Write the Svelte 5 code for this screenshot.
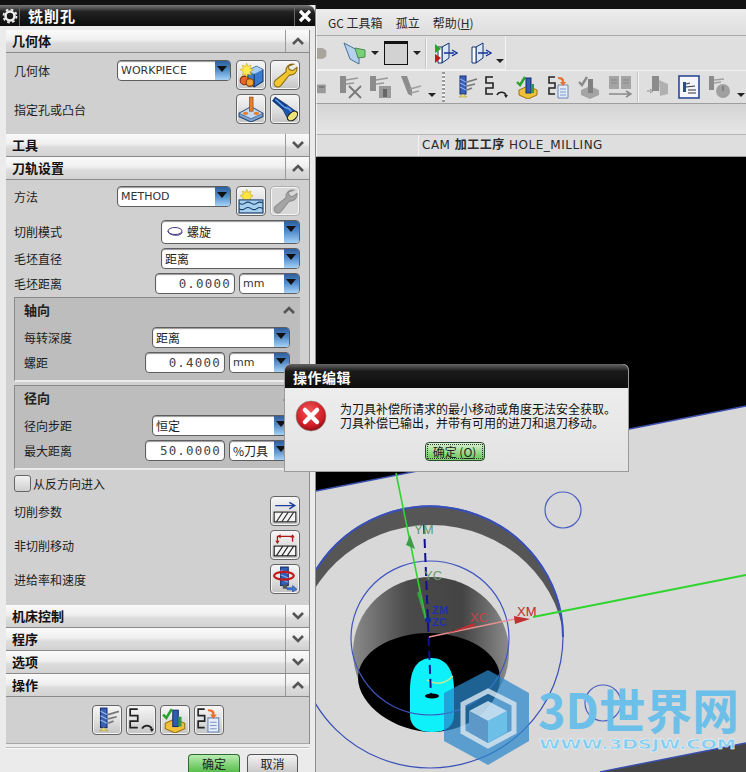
<script>
	const opButtons = ['gen', 'replay', 'verify', 'post']
	const collapsed = ['机床控制', '程序', '选项']
</script>

{#snippet chevron(up)}
	<svg class="chev" viewBox="0 0 14 10" width="14" height="10">
		{#if up}
			<path d="M2 8l5-5 5 5" />
		{:else}
			<path d="M2 2l5 5 5-5" />
		{/if}
	</svg>
{/snippet}

{#snippet header(title, up)}
	<div class="header">
		<span>{title}</span>
		<div class="toggle">{@render chevron(up)}</div>
	</div>
{/snippet}

{#snippet arrowBtn()}
	<span class="arrow"><i></i></span>
{/snippet}

{#snippet ic(name)}
	<svg viewBox="0 0 24 24" width="24" height="24">
		{#if name === 'wp'}
			<path d="M9 8l8-4 6 3v11l-8 5-6-4z" fill="#3a7bd0" stroke="#12396f" />
			<path d="M9 8l8-4 6 3-8 4z" fill="#a7cdf2" />
			<path d="M15 11v12" stroke="#12396f" />
			<circle cx="6" cy="17" r="4" fill="#e8662a" stroke="#7a2a10" />
			<circle cx="11" cy="19" r="3.5" fill="#f2a02e" stroke="#7a3a10" />
			<path d="M8 1l1 3 3-1-1 3 3 1-3 2 1 3-3-1-1 3-1-3-3 1 1-3-3-2 3-1-1-3 3 1z" fill="#ffec4c" stroke="#d0a820" stroke-width=".6" />
		{:else if name === 'wrench' || name === 'wrenchoff'}
			<path d="M20 2a6 6 0 0 0-7 7L3 17a3.5 3.5 0 0 0 5 5l8-10a6 6 0 0 0 7-7l-4 3-3-1-1-3z" fill={name === 'wrench' ? '#f2c62e' : '#a4a4a4'} stroke={name === 'wrench' ? '#8a6a10' : '#8e8e8e'} />
		{:else if name === 'hole'}
			<path d="M1 16l11-6 11 6v3l-11 5-11-5z" fill="#7fa4d4" stroke="#2a4a78" />
			<path d="M1 16l11-6 11 6-11 5z" fill="#c4d8f0" stroke="#2a4a78" stroke-width=".6" />
			<ellipse cx="7" cy="16" rx="2.6" ry="1.5" fill="#e8802a" />
			<ellipse cx="17" cy="16" rx="2.6" ry="1.5" fill="#e8802a" />
			<rect x="10.5" y="1" width="3.4" height="13" fill="#e8802a" stroke="#8a4210" stroke-width=".6" />
		{:else if name === 'torch'}
			<path d="M3 1L0.500 4.500 10 12.500 13.500 8z" fill="#10408e" stroke="#0a1f50" stroke-width=".6" />
			<path d="M13.500 8L10 12.500 15 22 23 15z" fill="#1a55b0" stroke="#0a1f50" stroke-width=".6" />
			<path d="M3 3l8 7 5 2 3 4" fill="none" stroke="#6aa4ec" stroke-width="1.400" />
			<ellipse cx="19" cy="18.500" rx="5.400" ry="3.400" transform="rotate(-42 19 18.500)" fill="#f0e27a" stroke="#1a1a1a" />
		{:else if name === 'method'}
			<path d="M8 1l1 3 3-1-1 3 3 1-3 2 1 3-3-1-1 3-1-3-3 1 1-3-3-2 3-1-1-3 3 1z" fill="#ffe83c" stroke="#c8a820" stroke-width=".6" />
			<rect x="1" y="11" width="22" height="12" fill="#a8d0ee" stroke="#17406e" />
			<path d="M1 14q3 2 5.500 0t5.500 0 5.500 0 5.500 0M1 19q3 2 5.500 0t5.500 0 5.500 0 5.500 0" fill="none" stroke="#17406e" />
		{:else if name === 'cut'}
			<path d="M3 7h17M16 4l5 3-5 3" fill="none" stroke="#1f3f9c" stroke-width="1.3" />
			<rect x="2" y="13" width="20" height="9" fill="#f4f4f4" stroke="#222" />
			<path d="M4 22l6-9M9 22l6-9M14 22l6-9" stroke="#333" />
		{:else if name === 'noncut'}
			<path d="M5 9V4h14v5" fill="none" stroke="#b01818" stroke-width="1.2" />
			<path d="M3 8l2 3 2-3zM17 5l2-3 2 3zM8 2L5 4l3 2z" fill="#b01818" />
			<rect x="2" y="13" width="20" height="9" fill="#f4f4f4" stroke="#111" />
			<path d="M4 22l6-9M9 22l6-9M14 22l6-9" stroke="#222" />
		{:else if name === 'feed'}
			<rect x="8" y="1" width="7" height="17" fill="#2f5fb8" stroke="#112a66" />
			<path d="M8 4l7 3M8 8l7 3M8 12l7 3" stroke="#88aee8" />
			<ellipse cx="11" cy="9" rx="9" ry="3.6" fill="none" stroke="#c01a1a" stroke-width="2" />
			<rect x="10" y="17" width="4" height="4" fill="#555" />
			<path d="M14 20h5v-2l4 3.500-4 2.500v-2h-5z" fill="#3a78e0" stroke="#1a3a88" stroke-width=".5" />
		{:else if name === 'gen'}
			<rect x="6" y="1" width="6" height="18" fill="#3a60b8" stroke="#172e70" />
			<path d="M6 4l6 3M6 8l6 3M6 12l6 3" stroke="#9ab8ee" />
			<path d="M13 7l10-3M13 11l8-2M13 15l5-2" stroke="#777" stroke-width="1.6" />
			<path d="M9 19l-4 3h8z" fill="#f0dc70" stroke="#a09030" stroke-width=".5" />
		{:else if name === 'replay'}
			<path d="M9 2H2v6h7v5H2v6h7" fill="none" stroke="#222" stroke-width="1.6" />
			<path d="M13 20a5 5 0 0 1 9 0" fill="none" stroke="#222" stroke-width="1.6" />
			<path d="M20 20h4l-2 3z" fill="#222" />
		{:else if name === 'verify'}
			<path d="M1 7l3 3 5-8" fill="none" stroke="#2aa32a" stroke-width="2.4" />
			<path d="M3 15l9-4 9 4v5l-9 4-9-4z" fill="#f0c038" stroke="#9a7410" />
			<rect x="10" y="3" width="5" height="15" fill="#2f5fb0" stroke="#12306c" />
			<rect x="15" y="9" width="3" height="9" fill="#2d9a4a" />
		{:else if name === 'post'}
			<path d="M8 2H2v6h6v5H2v6h6" fill="none" stroke="#222" stroke-width="1.5" />
			<path d="M11 10h10v13H11z" fill="#e4ecf8" stroke="#6a86b8" />
			<path d="M13 14h6M13 17h6M13 20h6" stroke="#7a96c4" />
			<path d="M11 2q7 0 6 5h2l-3 4-3-4h2q0-3-4-3z" fill="#e8702a" />
		{:else if name === 'clip'}
			<path d="M0 4h9l6 4v9l-5 4H0z" fill="#a9a49c" />
		{:else if name === 'view'}
			<path d="M2 2l15 8v13L8 18z" fill="#b4d2ee" stroke="#4a6f96" />
			<path d="M13 7l10 2v7l-7 1z" fill="#78d078" stroke="#4a8a4a" />
		{:else if name === 'box'}
			<rect x="0.500" y="0.500" width="23" height="23" fill="#d2d2d2" stroke="#111" />
			<rect x="0" y="0" width="24" height="3" fill="#111" />
		{:else if name === 'boxa' || name === 'boxb'}
			<path d="M8 6l7-4v15l-7 5z" fill="#d8e8fa" stroke="#12306c" />
			<path d="M4 6h4v16H4z" fill="#fff" stroke="#12306c" />
			<path d="M10 12h10M18 9l5 3-5 3" fill="none" stroke="#12309c" stroke-width="1.3" />
			{#if name === 'boxa'}
				<path d="M1 3l6 5-6 4z" fill="#2aa32a" />
				<path d="M1 13l6 4-6 5z" fill="#c01a1a" />
			{/if}
		{:else if name === 'gdoc'}
			<rect x="0" y="8" width="14" height="14" fill="#9a9a9a" />
			<rect x="3" y="11" width="9" height="2" fill="#6e6e6e" />
		{:else if name === 'gx'}
			<rect x="2" y="1" width="6" height="17" fill="#8c8c8c" />
			<path d="M8 5l12-2M8 9l8-1" stroke="#9a9a9a" stroke-width="1.6" />
			<path d="M11 11l12 12M23 11L11 23" stroke="#777" stroke-width="1.8" />
		{:else if name === 'gstop'}
			<rect x="2" y="1" width="6" height="15" fill="#8c8c8c" />
			<path d="M8 5l12-2M8 9l8-1" stroke="#9a9a9a" stroke-width="1.6" />
			<rect x="11" y="11" width="12" height="12" fill="#999" />
			<rect x="15" y="14" width="4" height="8" fill="#666" />
		{:else if name === 'gtool'}
			<path d="M3 1l6 0 5 14v6l-4-2z" fill="#8c8c8c" />
			<path d="M12 14l11-3M13 18l8-2" stroke="#a0a0a0" stroke-width="1.6" />
		{:else if name === 'gcheck'}
			<path d="M1 7l3 3 5-8" fill="none" stroke="#8a8a8a" stroke-width="2.4" />
			<path d="M3 15l9-4 9 4v5l-9 4-9-4z" fill="#a4a4a4" />
			<rect x="10" y="4" width="5" height="14" fill="#808080" />
		{:else if name === 'gbook'}
			<rect x="1" y="1" width="10" height="13" fill="#a4a4a4" />
			<rect x="13" y="1" width="10" height="13" fill="#a4a4a4" />
			<path d="M3 5h6M3 8h6M15 5h6M15 8h6" stroke="#888" />
			<path d="M1 19h20M18 16l5 3-5 3" fill="none" stroke="#8a8a8a" stroke-width="1.6" />
		{:else if name === 'gmove'}
			<rect x="6" y="1" width="7" height="15" fill="#8c8c8c" />
			<path d="M13 5l9 4v10l-8 2" fill="#b0b0b0" />
			<path d="M1 16h4M4 14l3 2-3 2" stroke="#909090" fill="none" />
		{:else if name === 'doc'}
			<rect x="2" y="1" width="20" height="22" fill="#f4f6fb" stroke="#2c4a94" stroke-width="1.6" />
			<rect x="6" y="7" width="3" height="10" fill="#2c4a94" />
			<path d="M9 9l4-1M9 12l9-1M11 15h8M11 18h8" stroke="#333" />
		{:else if name === 'gclock'}
			<rect x="2" y="1" width="5" height="14" fill="#8c8c8c" />
			<path d="M7 5l10-1M7 8l7-1" stroke="#a0a0a0" stroke-width="1.6" />
			<circle cx="16" cy="16" r="7" fill="#a0a0a0" />
			<path d="M16 11v5" stroke="#777" stroke-width="1.5" />
		{/if}
	</svg>
{/snippet}

{#snippet tbtn(name, off)}
	<button class="ibtn" class:off>{@render ic(name)}</button>
{/snippet}

{#snippet more()}
	<span class="more"></span>
{/snippet}

{#snippet dots()}
	<span class="tb-arrow"></span>
{/snippet}

<div class="page">
	<aside class="dialog">
		<div class="titlebar">
			<span class="gear">
				<svg viewBox="0 0 16 16" width="16" height="16">
					<circle cx="8" cy="8" r="4.500" fill="none" stroke="#eee" stroke-width="2.600" />
					<circle cx="8" cy="8" r="6.500" fill="none" stroke="#eee" stroke-width="1.800" stroke-dasharray="2.600 2.500" />
				</svg>
			</span>
			<span class="title">铣削孔</span>
			<span class="close">
				<svg viewBox="0 0 14 14" width="14" height="14"><path d="M2 2l10 10M12 2L2 12" stroke="#fff" stroke-width="3.200" /></svg>
			</span>
		</div>

		<div class="stack">
			{@render header('几何体', true)}
			<section class="body geo">
				<div class="row tall top">
					<span class="label">几何体</span>
					<div class="field combo"><span class="val lat">WORKPIECE</span>{@render arrowBtn()}</div>
					{@render tbtn('wp')}
					{@render tbtn('wrench')}
				</div>
				<div class="row tall">
					<span class="label">指定孔或凸台</span>
					{@render tbtn('hole')}
					{@render tbtn('torch')}
				</div>
			</section>

			{@render header('工具', false)}
			{@render header('刀轨设置', true)}

			<section class="body path">
				<div class="row tall top">
					<span class="label">方法</span>
					<div class="field combo"><span class="val lat">METHOD</span>{@render arrowBtn()}</div>
					{@render tbtn('method')}
					{@render tbtn('wrenchoff', true)}
				</div>
				<div class="row mode">
					<span class="label">切削模式</span>
					<div class="field select wide big">
						<svg class="spiral" viewBox="0 0 18 12" width="18" height="12">
							<ellipse cx="9" cy="5" rx="7" ry="3.500" fill="none" stroke="#443a88" />
							<path d="M2 5c0 5 14 6 14 1" fill="none" stroke="#443a88" />
						</svg>
						<span class="val">螺旋</span>{@render arrowBtn()}
					</div>
				</div>
				<div class="row std">
					<span class="label">毛坯直径</span>
					<div class="field select wide"><span class="val">距离</span>{@render arrowBtn()}</div>
				</div>
				<div class="row std">
					<span class="label">毛坯距离</span>
					<div class="field input"><span>0.0000</span></div>
					<div class="field unit"><span class="val lat">mm</span>{@render arrowBtn()}</div>
				</div>

				<div class="group">
					<div class="ghead"><b>轴向</b>{@render chevron(true)}</div>
					<div class="row std nomargin">
						<span class="label">每转深度</span>
						<div class="field select wide"><span class="val">距离</span>{@render arrowBtn()}</div>
					</div>
					<div class="row std">
						<span class="label">螺距</span>
						<div class="field input"><span>0.4000</span></div>
						<div class="field unit"><span class="val lat">mm</span>{@render arrowBtn()}</div>
					</div>
				</div>

				<div class="group">
					<div class="ghead"><b>径向</b>{@render chevron(true)}</div>
					<div class="row std nomargin">
						<span class="label">径向步距</span>
						<div class="field select wide"><span class="val">恒定</span>{@render arrowBtn()}</div>
					</div>
					<div class="row std">
						<span class="label">最大距离</span>
						<div class="field input"><span>50.0000</span></div>
						<div class="field unit"><span class="val">%刀具</span>{@render arrowBtn()}</div>
					</div>
				</div>

				<div class="check"><span class="box"></span>从反方向进入</div>

				<div class="row tall sp">
					<span class="label">切削参数</span>
					{@render tbtn('cut')}
				</div>
				<div class="row tall sp">
					<span class="label">非切削移动</span>
					{@render tbtn('noncut')}
				</div>
				<div class="row tall sp">
					<span class="label">进给率和速度</span>
					{@render tbtn('feed')}
				</div>
			</section>

			{#each collapsed as name}
				{@render header(name, false)}
			{/each}

			{@render header('操作', true)}
			<section class="body ops">
				{#each opButtons as b}
					{@render tbtn(b)}
				{/each}
			</section>
		</div>

		<div class="footer">
			<button class="btn ok">确定</button>
			<button class="btn">取消</button>
		</div>
	</aside>

	<main class="main">
		<nav class="menubar">
			<span>GC 工具箱</span>
			<span>孤立</span>
			<span>帮助(<u>H</u>)</span>
		</nav>

		<div class="tbar one">
			<div class="tgroup">
				<span class="tic clip">{@render ic('clip')}</span>
				<span class="tic s10">{@render ic('view')}</span>
				{@render dots()}
				<span class="tic">{@render ic('box')}</span>
				{@render dots()}
				<span class="tsep"></span>
				<span class="tic">{@render ic('boxa')}</span>
				<span class="tic s6">{@render ic('boxb')}</span>
				{@render more()}
			</div>
		</div>

		<div class="tbar two">
			<span class="tic clip">{@render ic('gdoc')}</span>
			<span class="tic">{@render ic('gx')}</span>
			<span class="tic">{@render ic('gstop')}</span>
			<span class="tic">{@render ic('gtool')}</span>
			{@render more()}
			<span class="tsep grip"></span>
			<span class="tic">{@render ic('gen')}</span>
			<span class="tic">{@render ic('replay')}</span>
			<span class="tic s2">{@render ic('verify')}</span>
			<span class="tic s1">{@render ic('post')}</span>
			<span class="tic s1">{@render ic('gcheck')}</span>
			<span class="tic">{@render ic('gbook')}</span>
			<span class="tsep"></span>
			<span class="tic">{@render ic('gmove')}</span>
			<span class="tic s1">{@render ic('doc')}</span>
			<span class="tic">{@render ic('gclock')}</span>
			{@render more()}
		</div>

		<div class="band"></div>

		<div class="tabbar">
			<span class="tab">CAM <b>加工工序</b> HOLE_MILLING</span>
		</div>

		<svg class="viewport" viewBox="316 157 430 615" width="430" height="615">
			<defs>
				<linearGradient id="wall" x1="0" x2="1" y1="0" y2="0">
					<stop offset="0" stop-color="#8a8a8a" />
					<stop offset="0.350" stop-color="#4a4a4a" />
					<stop offset="0.700" stop-color="#444" />
					<stop offset="1" stop-color="#8c8c8c" />
				</linearGradient>
			</defs>
			<rect x="316" y="157" width="430" height="615" fill="#000" />
			<path d="M316 491L746 406V743L600 772H316z" fill="#d8d8d8" />
			<path d="M746 743L600 772H746z" fill="#454545" />
			<path d="M316 491L746 406M600 772L746 743" fill="none" stroke="#3a4fb0" stroke-width="1.500" />

			<circle cx="563" cy="510" r="18" fill="none" stroke="#4a5fc0" stroke-width="1.200" />

			<ellipse cx="430" cy="637" rx="133" ry="131" fill="#565656" />
			<ellipse cx="431" cy="652" rx="134" ry="127" fill="#d8d8d8" />
			<path d="M316 570A133 131 0 0 1 563 637" fill="none" stroke="#3a50b8" stroke-width="2" />
			<ellipse cx="430" cy="637" rx="133" ry="131" fill="none" stroke="#3a50b8" stroke-width="1.200" />

			<ellipse cx="431" cy="652" rx="78" ry="75" fill="url(#wall)" />
			<path d="M358 678A71 45 0 0 1 500 678C500 705 470 732 432 732 395 732 358 705 358 678z" fill="#000" />
			<path d="M410 690C410 668 418 658 432 658 446 658 454 670 454 690V715C454 726 446 732 432 732 418 732 410 726 410 715z" fill="#0ef0fa" />
			<path d="M427 680q14 8 26-4" fill="none" stroke="#c8e890" stroke-width="1.500" />
			<ellipse cx="430" cy="638" rx="79" ry="77" fill="none" stroke="#4056c0" stroke-width="1.200" />

			<circle cx="603" cy="703" r="18" fill="none" stroke="#4a5fc0" stroke-width="1.200" />

			<path d="M396 473L426 620" stroke="#2fd42f" stroke-width="1.600" />
			<path d="M410 535l-4 10 9 4z" fill="#3f9a4a" />
			<path d="M420 590l-3 3 9 30z" fill="#3f9a4a" />
			<path d="M533 617L746 575" stroke="#2fd42f" stroke-width="1.800" />
			<path d="M424 525L431 696" stroke="#101090" stroke-width="2" stroke-dasharray="9 5" />
			<circle cx="428" cy="620" r="3" fill="#1428a0" />
			<path d="M429 637L515 619" stroke="#e89090" stroke-width="1.500" />
			<path d="M445 634l30-8-1-3z" fill="#c03030" />
			<path d="M514 616l16 3-15 5z" fill="#c03030" />
			<ellipse cx="432" cy="696" rx="7" ry="2.500" fill="#000" />

			<g class="vlabel">
				<text x="414" y="534" fill="#5a9a6a">YM</text>
				<text x="424" y="580" fill="#6a9a70">YC</text>
				<text x="470" y="622" fill="#c04848">XC</text>
				<text x="517" y="616" fill="#c02828">XM</text>
			</g>
			<g class="vlabel small">
				<text x="432" y="614" fill="#2030b0">ZM</text>
				<text x="432" y="626" fill="#2030b0">ZC</text>
			</g>

			<g class="mark">
				<path d="M488 670L529 693V741L488 765 444 741V693z" fill="#2a86cc" opacity=".72" />
				<path d="M488 691L514 704V732L488 746 463 732V704z" fill="none" stroke="#dce8f0" stroke-width="5" opacity=".8" />
				<path d="M488 701L507 711 488 721 469 711z" fill="#cfe4f2" opacity=".85" />
				<path d="M469 711L488 721V743L469 732z" fill="#5d98c8" />
				<path d="M507 711L488 721V743L507 732z" fill="#6cc0e8" />
				<text class="wm-big" x="538" y="729" textLength="201" lengthAdjust="spacingAndGlyphs">3D世界网</text>
				<text class="wm-small" x="539" y="749" textLength="197" lengthAdjust="spacingAndGlyphs">WWW.3DSJW.COM</text>
			</g>
		</svg>
	</main>

	<div class="modal">
		<div class="mtitle">操作编辑</div>
		<div class="mbody">
			<div class="mrow">
				<svg viewBox="0 0 32 32" width="32" height="32">
					<defs>
						<radialGradient id="err" cx="0.450" cy="0.350" r="0.700">
							<stop offset="0" stop-color="#f25a5a" />
							<stop offset="0.700" stop-color="#cf1c24" />
							<stop offset="1" stop-color="#7a0c10" />
						</radialGradient>
					</defs>
					<circle cx="16" cy="16" r="15" fill="url(#err)" stroke="#8a8a8a" stroke-width=".6" />
					<path d="M10 10l12 12M22 10L10 22" stroke="#fff" stroke-width="4.500" stroke-linecap="round" />
				</svg>
				<p>为刀具补偿所请求的最小移动或角度无法安全获取。<br />刀具补偿已输出，并带有可用的进刀和退刀移动。</p>
			</div>
			<button class="mok"><span>确定 (<u>O</u>)</span></button>
		</div>
	</div>
</div>

<style>
	:global(body) {
		background: #111;
	}

	.page {
		position: relative;
		display: flex;
		width: 746px;
		height: 772px;
		overflow: hidden;
		background: #121212;
		font-family: "Noto Sans CJK SC", "DejaVu Sans", sans-serif;
		font-size: 12px;
		color: #1c1c1c;
	}

	/* left dialog */
	.dialog {
		width: 315px;
		height: 767px;
		margin-top: 5px;
		background: #ebebeb;
		border-right: 1px solid #8c8c8c;
		flex: none;
	}

	.titlebar {
		display: flex;
		align-items: center;
		height: 21px;
		border-top-right-radius: 8px;
		background: linear-gradient(#7a7a7a, #222 32%, #0c0c0c);
		color: #fff;
	}

	.gear {
		display: flex;
		width: 20px;
		justify-content: center;
		border-right: 1px solid #666;
		height: 100%;
		align-items: center;
		padding-left: 1px;
		box-sizing: border-box;
	}

	.title {
		flex: 1;
		margin-left: 8px;
		font-size: 15px;
		font-weight: 700;
		letter-spacing: 1px;
		line-height: 21px;
	}

	.close {
		display: flex;
		width: 20px;
		height: 100%;
		justify-content: center;
		align-items: center;
		border-left: 1px solid #666;
	}

	.stack {
		margin: 4px 5px 0 6px;
		border-right: 1px solid #8c8c8c;
	}

	.header {
		display: flex;
		align-items: center;
		justify-content: space-between;
		height: 23px;
		box-sizing: border-box;
		padding-left: 6px;
		border-bottom: 1px solid #8a8a8a;
		background: linear-gradient(#fafafa, #efefef 45%, #dcdcdc 60%, #d2d2d2);
		font-size: 13px;
		font-weight: 700;
		color: #111;
	}

	.header span {
		margin-top: -2px;
	}

	.toggle {
		display: flex;
		width: 23px;
		height: 100%;
		align-items: center;
		justify-content: center;
		border-left: 1px solid #9a9a9a;
	}

	.chev {
		fill: none;
		stroke: #555;
		stroke-width: 2.600;
	}

	.body {
		background: #d0d0d0;
		padding: 0 9px 0 8px;
	}

	.geo {
		height: 81px;
		padding-top: 7px;
		box-sizing: border-box;
	}

	.path {
		height: 425px;
		padding-top: 6px;
		box-sizing: border-box;
	}

	.ops {
		display: flex;
		justify-content: center;
		gap: 4px;
		height: 47px;
		padding: 8px 0 0 0;
		box-sizing: border-box;
		border-bottom: 1px solid #a8a8a8;
	}

	.row {
		display: flex;
		align-items: center;
	}

	.tall {
		height: 30px;
		gap: 4px;
	}

	.tall + .tall {
		margin-top: 4px;
	}

	.top {
		align-items: flex-start;
	}

	.top .label {
		line-height: 21px;
	}

	.mode {
		height: 25px;
		margin-top: 3px;
	}

	.std {
		height: 21px;
		margin-top: 4px;
		gap: 4px;
	}

	.nomargin {
		margin-top: 0;
	}

	.label {
		flex: 1;
		white-space: nowrap;
		font-size: 12px;
	}

	.field {
		display: flex;
		align-items: center;
		height: 21px;
		box-sizing: border-box;
		flex: none;
		background: #fff;
		border: 1px solid #5e5e5e;
		border-radius: 4px;
		box-shadow: inset 0 1px 1px #999;
		overflow: hidden;
	}

	.val {
		flex: 1;
		padding-left: 3px;
		white-space: nowrap;
	}

	.lat {
		font-family: "DejaVu Sans", sans-serif;
		font-size: 11px;
		color: #333;
	}

	.combo {
		width: 114px;
		margin-right: 1px;
	}

	.select.wide {
		width: 139px;
	}

	.big {
		height: 24px;
	}

	.spiral {
		margin-left: 4px;
	}

	.input {
		width: 80px;
		justify-content: flex-end;
		padding-right: 3px;
		font-family: "DejaVu Sans Mono", monospace;
		font-size: 12.500px;
		letter-spacing: 1.200px;
		color: #444;
	}

	.unit {
		width: 61px;
	}

	.arrow {
		position: relative;
		width: 15px;
		height: 100%;
		flex: none;
		background: linear-gradient(#2e5f9e, #4f88c8 45%, #a4d2f6);
	}

	.arrow i {
		position: absolute;
		left: 2px;
		top: 5px;
		width: 0;
		height: 0;
		border-left: 5px solid transparent;
		border-right: 5px solid transparent;
		border-top: 6px solid #111;
	}

	.ibtn {
		display: flex;
		align-items: center;
		justify-content: center;
		width: 30px;
		height: 30px;
		padding: 0;
		flex: none;
		box-sizing: border-box;
		border: 1px solid #666;
		border-radius: 4px;
		background: linear-gradient(#f6f6f6, #dedede 55%, #c4c4c4);
		box-shadow: inset 0 0 0 1px #f4f4f4;
	}

	.ibtn svg {
		width: 26px;
		height: 26px;
	}

	.off {
		border-color: #b0b0b0;
		background: #d8d8d8;
	}

	.group {
		margin-top: 3px;
		height: 85px;
		box-sizing: border-box;
		padding: 0 10px 0 9px;
		background: #bdbdbd;
		border: 1px solid #8a8a8a;
		border-right: 0;
		border-bottom: 2px solid #ececec;
	}

	.group .wide {
		width: 138px;
	}

	.ghead {
		display: flex;
		align-items: center;
		justify-content: space-between;
		height: 29px;
		padding-bottom: 6px;
		box-sizing: border-box;
	}

	.ghead .chev {
		margin-right: -6px;
	}

	.ghead b {
		font-size: 13px;
		color: #222;
	}

	.check {
		display: flex;
		align-items: center;
		gap: 2px;
		height: 17px;
		margin-top: 5px;
	}

	.box {
		width: 15px;
		height: 15px;
		border: 1px solid #666;
		border-radius: 3px;
		background: linear-gradient(#f2f2f2, #cfcfcf);
	}

	.sp {
		margin-top: 4px;
	}

	.footer {
		display: flex;
		justify-content: flex-end;
		gap: 7px;
		margin: 4px 6px 0 6px;
		padding: 5px 11px 0 0;
		border-top: 1px solid #fafafa;
		box-shadow: 0 -1px 0 #bbb;
	}

	.btn {
		width: 51px;
		height: 19px;
		padding: 0;
		border: 1px solid #555;
		border-bottom: 0;
		border-radius: 4px 4px 0 0;
		background: linear-gradient(#f2f2f2, #c8c8c8);
		font: inherit;
		font-size: 12px;
		line-height: 18px;
		color: #222;
	}

	.ok {
		width: 52px;
		background: linear-gradient(#b8ecb0, #5cc050 90%);
		border-color: #2d6a34;
	}

	/* main window */
	.main {
		display: flex;
		flex-direction: column;
		width: 430px;
		padding-top: 9px;
		flex: none;
	}

	.menubar {
		display: flex;
		height: 27px;
		box-sizing: border-box;
		align-items: center;
		gap: 13px;
		padding-left: 11px;
		background: linear-gradient(#ececec, #dedede);
		border-bottom: 1px solid #a9a9a9;
		border-left: 1px solid #f4f4f4;
		color: #2a2a2a;
	}

	.tbar {
		display: flex;
		height: 34px;
		background: #dfdfdf;
		border-left: 1px solid #f4f4f4;
		box-sizing: border-box;
	}

	.tgroup {
		display: flex;
		align-items: center;
		gap: 4px;
		padding-right: 1px;
		border-right: 1px solid #f2f2f2;
		border-bottom: 1px solid #f2f2f2;
	}

	.two {
		align-items: center;
		gap: 6px;
		border-bottom: 1px solid #9e9e9e;
		border-top: 1px solid #f0f0f0;
	}

	.tic {
		display: flex;
		width: 24px;
		height: 24px;
		flex: none;
	}

	.clip {
		width: 15px;
		overflow: hidden;
	}

	.s10 {
		margin-left: 6px;
	}

	.s6 {
		margin-left: 6px;
	}

	.s2 {
		margin-left: 2px;
	}

	.s1 {
		margin-left: 1px;
	}

	.tb-arrow {
		width: 0;
		height: 0;
		margin: 0 1px;
		border-left: 4px solid transparent;
		border-right: 4px solid transparent;
		border-top: 4px solid #222;
	}

	.tsep {
		width: 1px;
		height: 30px;
		margin: 0 3px 0 0;
		background: #f6f6f6;
		box-shadow: -1px 0 0 #c4c4c4;
	}

	.two .tsep {
		margin-right: 1px;
	}

	.two .grip {
		margin-right: 3px;
		width: 3px;
		background: repeating-linear-gradient(#9a9a9a 0 2px, #f2f2f2 2px 4px);
		box-shadow: none;
	}

	.more {
		align-self: flex-end;
		width: 0;
		height: 0;
		margin: 0 0 6px 0;
		border-left: 4px solid transparent;
		border-right: 4px solid transparent;
		border-top: 4px solid #222;
	}

	.band {
		height: 30px;
		background: linear-gradient(#d4d4d4, #e6e6e6);
		border-left: 1px solid #f4f4f4;
		border-bottom: 1px solid #b4b4b4;
	}

	.tabbar {
		height: 22px;
		box-sizing: border-box;
		padding-left: 101px;
		background: #dedede;
		border-left: 1px solid #f4f4f4;
		border-bottom: 1px solid #9a9a9a;
	}

	.tab {
		display: block;
		height: 100%;
		padding-left: 3px;
		border-left: 1px solid #f2f2f2;
		font-family: "DejaVu Sans", "Noto Sans CJK SC", sans-serif;
		font-size: 12px;
		line-height: 20px;
		letter-spacing: 0.500px;
		color: #2a2a2a;
		white-space: nowrap;
	}

	.viewport {
		display: block;
		flex: none;
	}

	.vlabel text {
		font-family: "Liberation Sans", sans-serif;
		font-size: 13px;
	}

	.vlabel.small text {
		font-size: 11px;
		font-weight: 700;
	}

	.wm-big {
		font-family: "Noto Sans CJK SC", sans-serif;
		font-weight: 700;
		font-size: 48px;
		fill: #6cbfe8;
	}

	.wm-small {
		font-family: "DejaVu Sans", sans-serif;
		font-weight: 700;
		font-size: 14px;
		fill: #84cdf0;
		stroke: #fff;
		stroke-width: 0.300px;
	}

	/* message box, lies over both panes */
	.modal {
		position: absolute;
		left: 284px;
		top: 364px;
		width: 345px;
		height: 108px;
		box-sizing: border-box;
		border: 1px solid #9a9a9a;
		border-top: 0;
		border-radius: 6px 6px 0 0;
		background: linear-gradient(#f0f0f0, #e2e2e2);
	}

	.mtitle {
		height: 24px;
		padding-left: 8px;
		border-radius: 6px 6px 0 0;
		background: linear-gradient(#666, #1a1a1a 30%, #0e0e0e);
		color: #fff;
		font-size: 14px;
		font-weight: 700;
		line-height: 26px;
		letter-spacing: 0.500px;
	}

	.mbody {
		display: flex;
		flex-direction: column;
		align-items: center;
	}

	.mrow {
		display: flex;
		align-items: center;
		align-self: stretch;
		height: 55px;
		padding-left: 10px;
	}

	.mrow p {
		margin: 0 0 0 13px;
		font-size: 12px;
		line-height: 14px;
		color: #111;
		white-space: nowrap;
	}

	.mok {
		width: 60px;
		height: 19px;
		padding: 1px;
		margin-left: -4px;
		margin-top: -1px;
		border: 1px solid #2c4a30;
		border-radius: 4px;
		background: linear-gradient(#dcf2d4, #7ed070 75%);
		font: inherit;
		font-size: 12px;
		color: #222;
	}

	.mok span {
		display: block;
		height: 100%;
		line-height: 14px;
		border: 1px dotted #333;
		box-sizing: border-box;
	}
</style>
